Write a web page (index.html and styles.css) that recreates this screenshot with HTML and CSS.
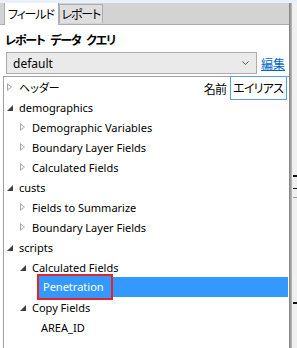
FILE: index.html
```html
<!DOCTYPE html>
<html lang="ja">
<head>
    <meta charset="UTF-8">
    <title>フィールド</title>
    <link rel="stylesheet" href="styles.css">
</head>
<body>

<div class="window">
    <div class="pane">
        <div class="tabs">
            <div class="tab active">フィールド</div>
            <div class="tab">レポート</div>
        </div>

        <div class="panel">
            <div class="heading">レポート データ クエリ</div>
            <div class="query-row">
                <div class="combo">
                    <span>default</span>
                    <svg class="chevron" width="7" height="4" viewBox="0 0 7 4"><path d="M0.5 0.5 L3.5 3.5 L6.5 0.5" fill="none" stroke="#555" stroke-width="1"/></svg>
                </div>
                <a class="edit-link" href="#">編集</a>
            </div>

            <div class="tree">
                <div class="row lvl1">
                    <span class="arrow closed"></span><span class="label jp">ヘッダー</span>
                    <div class="cols">
                        <span class="col-name">名前</span>
                        <span class="col-alias">エイリアス</span>
                    </div>
                </div>
                <div class="row lvl1"><span class="arrow open"></span><span class="label">demographics</span></div>
                <div class="row lvl2"><span class="arrow closed"></span><span class="label">Demographic Variables</span></div>
                <div class="row lvl2"><span class="arrow closed"></span><span class="label">Boundary Layer Fields</span></div>
                <div class="row lvl2"><span class="arrow closed"></span><span class="label">Calculated Fields</span></div>
                <div class="row lvl1"><span class="arrow open"></span><span class="label">custs</span></div>
                <div class="row lvl2"><span class="arrow closed"></span><span class="label">Fields to Summarize</span></div>
                <div class="row lvl2"><span class="arrow closed"></span><span class="label">Boundary Layer Fields</span></div>
                <div class="row lvl1"><span class="arrow open"></span><span class="label">scripts</span></div>
                <div class="row lvl2"><span class="arrow open"></span><span class="label">Calculated Fields</span></div>
                <div class="row lvl3 selected"><span class="label">Penetration</span></div>
                <div class="row lvl2"><span class="arrow open"></span><span class="label">Copy Fields</span></div>
                <div class="row lvl3"><span class="label">AREA_ID</span></div>
            </div>
        </div>
    </div>

    <div class="splitter"></div>
    <div class="side">
        <span class="mark m1"></span>
        <span class="mark m2"></span>
        <span class="mark m3"></span>
        <span class="mark m4"></span>
    </div>
</div>

</body>
</html>
```

FILE: styles.css
```css
body {
    margin: 0;
    background-color: #fff;
    font-family: 'Noto Sans', 'Noto Sans CJK JP', sans-serif;
    font-size: 11px;
    color: #000;
}
.window {
    display: flex;
    width: 297px;
    height: 348px;
    border-top: 3px solid #eaf0fa;
    box-sizing: border-box;
    overflow: hidden;
}
.pane {
    width: 289px;
    display: flex;
    flex-direction: column;
}
.tabs {
    height: 22px;
    background-color: #d3d3d3;
    border-bottom: 1px solid #acacac;
    display: flex;
    align-items: flex-end;
    padding-left: 4px;
    box-sizing: border-box;
}
.tab, .heading, .edit-link, .cols, .jp {
    font-family: 'Noto Sans CJK JP', sans-serif;
    font-feature-settings: "palt";
    font-size: 12px;
}
.tab {
    height: 18px;
    padding: 0 2px;
    line-height: 18px;
    background-color: #dedede;
    border: 1px solid #acacac;
    border-bottom: none;
    margin-bottom: 1px;
    letter-spacing: -1.2px;
}
.tab.active {
    height: 22px;
    line-height: 21px;
    background-color: #fff;
    margin-bottom: -1px;
    padding: 0 4px 0 3px;
}
.panel {
    flex: 1;
    padding: 6px 0 0 3px;
}
.heading {
    font-weight: bold;
    padding-left: 2px;
    line-height: 17px;
    letter-spacing: -1.2px;
    word-spacing: 4px;
}
.query-row {
    display: flex;
    align-items: center;
    margin-top: 4px;
    padding-left: 3px;
}
.combo {
    width: 251px;
    height: 22px;
    box-sizing: border-box;
    border: 1px solid #acacac;
    background-color: #eaeaea;
    display: flex;
    align-items: center;
    justify-content: space-between;
    padding: 0 7px 0 6px;
    font-size: 12px;
}
.edit-link {
    margin-left: 4px;
    color: #0066cc;
}
.tree {
    margin-top: 2px;
    border-top: 1px solid #a0a0a0;
    border-left: 1px solid #a0a0a0;
    height: 280px;
}
.row {
    position: relative;
    height: 20px;
    display: flex;
    align-items: center;
}
.lvl1 { padding-left: 1px; }
.lvl2 { padding-left: 14px; }
.lvl3 { padding-left: 33px; }
.arrow {
    width: 11px;
    height: 9px;
    margin-right: 3px;
    position: relative;
}
.arrow.closed::before {
    content: '';
    position: absolute;
    left: 2px;
    top: 0;
    border-top: 4.5px solid transparent;
    border-bottom: 4.5px solid transparent;
    border-left: 5px solid #a6a6a6;
}
.arrow.closed::after {
    content: '';
    position: absolute;
    left: 3px;
    top: 2px;
    border-top: 2.5px solid transparent;
    border-bottom: 2.5px solid transparent;
    border-left: 3px solid #fff;
}
.arrow.open::before {
    content: '';
    position: absolute;
    left: 2px;
    top: 2px;
    border-left: 6px solid transparent;
    border-bottom: 6px solid #404040;
}
.label {
    white-space: nowrap;
    font-size: 11px;
}
.lvl3 .label {
    padding: 0 4px;
    line-height: 19px;
}
.selected {
    background-color: #3399ff;
    margin-left: 34px;
    padding-left: 0;
    margin-right: 1px;
}
.selected .label {
    color: #fff;
    background-color: #3399ff;
    outline: 2px solid #e8212b;
    padding: 0 4px 0 4px;
    margin-left: 1px;
    width: 64px;
    height: 22px;
    line-height: 22px;
}
.cols {
    position: absolute;
    right: 2px;
    top: -1px;
    display: flex;
    align-items: center;
    letter-spacing: -0.8px;
}
.col-name {
    margin-right: 4px;
}
.col-alias {
    border: 1px solid #5b9ee8;
    padding: 0 3px 0 2px;
    height: 22px;
    line-height: 22px;
}
.splitter {
    width: 1px;
    border-left: 1px solid #8a8a8a;
    border-right: 1px solid #b4b4b4;
    background-color: #9a9a9a;
}
.side {
    flex: 1;
    background-color: #f0f0f0;
    position: relative;
}
.mark {
    position: absolute;
    left: 1px;
    height: 2px;
    width: 5px;
    background-color: #111;
}
.m1 { top: 172px; }
.m2 { top: 185px; height: 1px; }
.m3 { top: 299px; }
.m4 { top: 194px; height: 1px; background-color: #999; }
```
